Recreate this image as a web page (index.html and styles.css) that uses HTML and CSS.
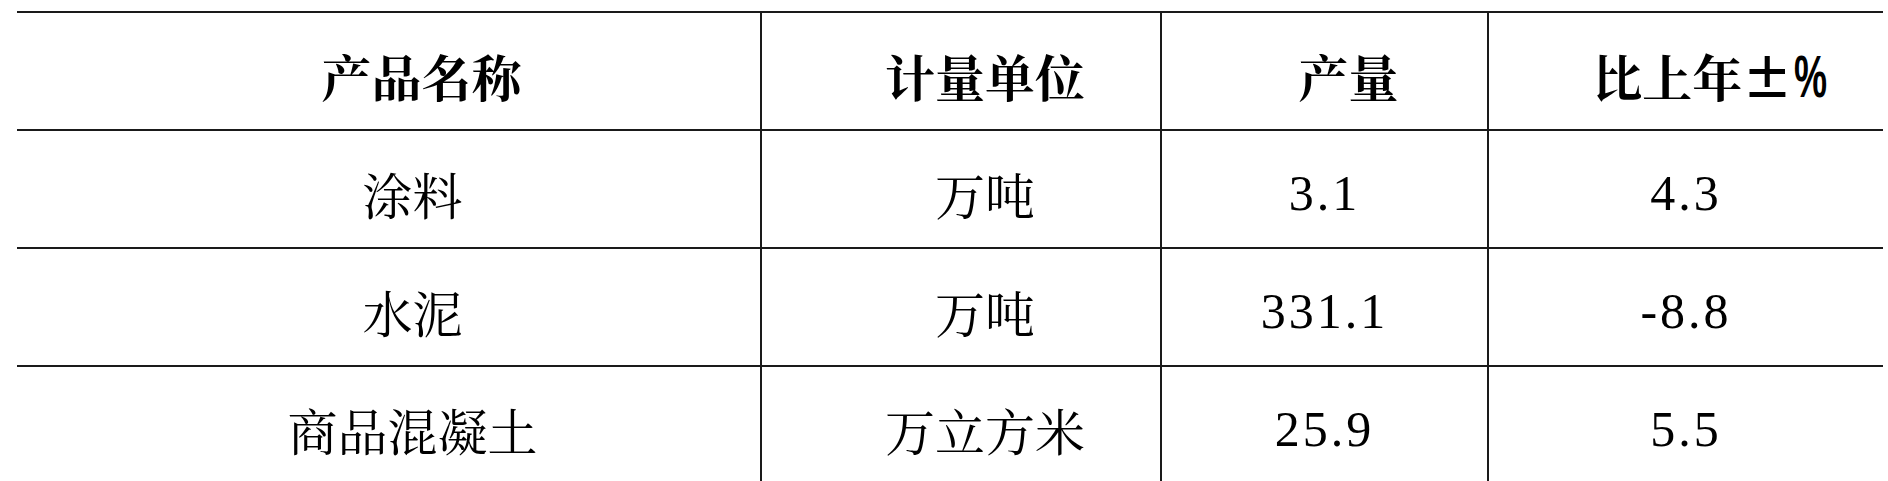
FILE: index.html
```html
<!DOCTYPE html>
<html lang="zh-CN">
<head>
<meta charset="utf-8">
<title>产品产量</title>
<link rel="stylesheet" href="styles.css">
</head>
<body>
<table class="tbl">
  <colgroup>
    <col class="c1"><col class="c2"><col class="c3"><col class="c4">
  </colgroup>
  <thead>
    <tr>
      <th class="cjk first">产品名称</th>
      <th class="cjk">计量单位</th>
      <th class="cjk">产量</th>
      <th class="cjk">比上年<span class="pm">±</span><span class="pct">%</span></th>
    </tr>
  </thead>
  <tbody>
    <tr>
      <td class="cjk">涂料</td>
      <td class="cjk">万吨</td>
      <td class="num">3.1</td>
      <td class="num">4.3</td>
    </tr>
    <tr>
      <td class="cjk">水泥</td>
      <td class="cjk">万吨</td>
      <td class="num">331.1</td>
      <td class="num">-8.8</td>
    </tr>
    <tr>
      <td class="cjk">商品混凝土</td>
      <td class="cjk">万立方米</td>
      <td class="num">25.9</td>
      <td class="num">5.5</td>
    </tr>
  </tbody>
</table>
</body>
</html>
```

FILE: styles.css
```css
html, body {
  margin: 0;
  padding: 0;
  background: #ffffff;
}
body {
  padding: 11px 5px 0 17px;
  overflow: hidden;
  font-family: "Noto Serif CJK SC", "Noto Sans CJK SC", serif;
  color: #000;
}
.tbl {
  border-collapse: collapse;
  table-layout: fixed;
  width: 1866px;
}
.c1 { width: 744px; }
.c2 { width: 400px; }
.c3 { width: 327px; }
.c4 { width: 395px; }

.tbl th,
.tbl td {
  padding: 8px 0 0 0;
  box-sizing: border-box;
  text-align: center;
  vertical-align: middle;
  border-top: 2px solid #1a1a1a;
  border-bottom: 2px solid #1a1a1a;
  border-left: 2px solid #1a1a1a;
  font-size: 50px;
  line-height: 1;
  white-space: nowrap;
}
.tbl tr > :first-child { border-left: none; }
.tbl th {
  font-weight: 700;
  height: 118px;
}
.tbl td { height: 118px; }
.cjk {
  padding-left: 48px !important;
}
.first {
  padding-left: 66px !important;
}
.pm {
  font-family: "Noto Sans CJK SC", sans-serif;
  font-weight: 700;
}
.pct {
  font-family: "Liberation Sans", sans-serif;
  font-weight: 700;
  font-size: 60px;
  line-height: 0.8;
  display: inline-block;
  transform: scaleX(0.62);
  transform-origin: left center;
  margin-right: -20px;
  margin-left: 2px;
}
.num {
  font-family: "Liberation Serif", "Noto Serif CJK SC", serif;
  font-size: 50px;
  letter-spacing: 3px;
}
```
